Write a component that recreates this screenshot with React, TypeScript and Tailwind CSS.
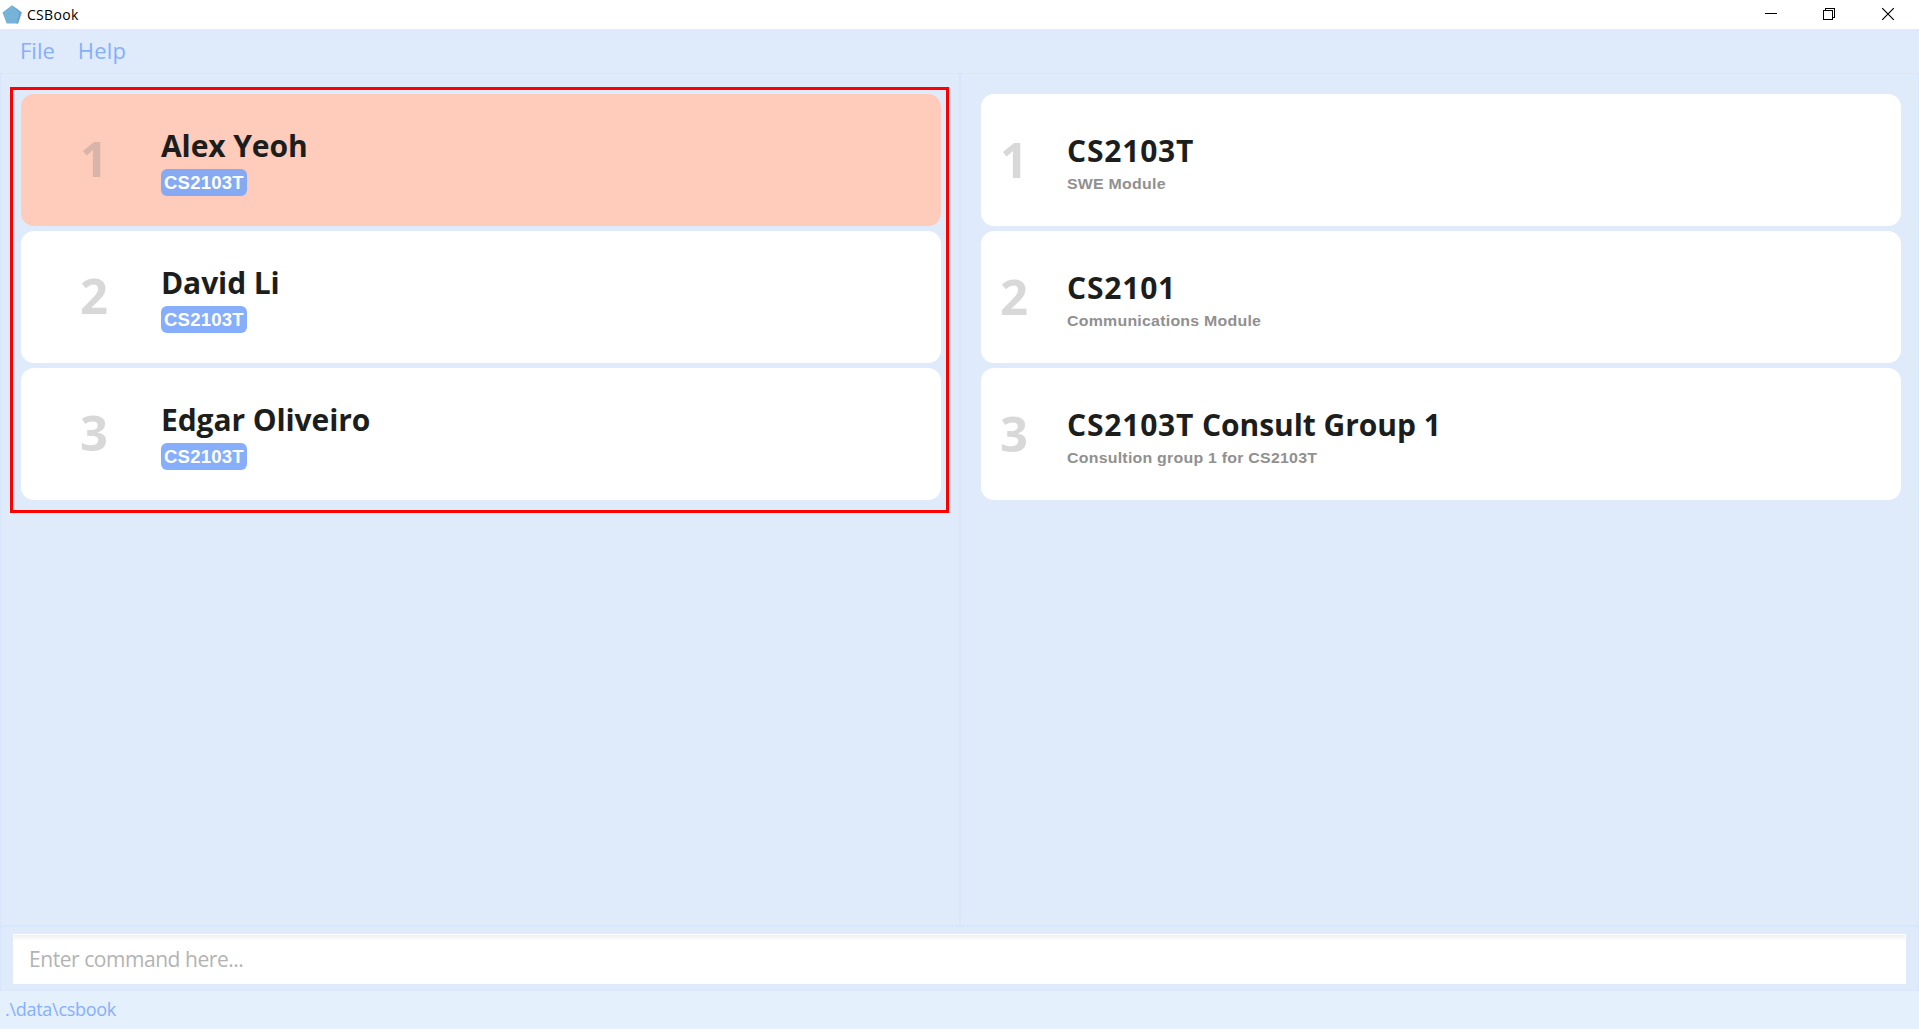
type Person = { id: number; name: string; tag: string; selected?: boolean };
type Group = { id: number; code: string; rest?: string; note: string };

const people: Person[] = [
  { id: 1, name: "Alex Yeoh", tag: "CS2103T", selected: true },
  { id: 2, name: "David Li", tag: "CS2103T" },
  { id: 3, name: "Edgar Oliveiro", tag: "CS2103T" },
];

const groups: Group[] = [
  { id: 1, code: "CS2103T", note: "SWE Module" },
  { id: 2, code: "CS2101", note: "Communications Module" },
  { id: 3, code: "CS2103T", rest: " Consult Group 1", note: "Consultion group 1 for CS2103T" },
];

function TitleBar() {
  return (
    <header className="flex h-[29px] shrink-0 items-center bg-white">
      <svg className="ml-[2px] h-5 w-5 shrink-0" viewBox="0 0 20 20">
        <path d="M10 0.3 19.7 7.6 16 18.6H4.6L0.5 7.6Z" fill="#77b2d8" />
        <path d="M10 0.3 19.7 7.6 16 18.6l-1.6 0 3-10.6Z" fill="#68a3cc" />
      </svg>
      <span className="ml-[5px] text-sm leading-[28px] tracking-[0.3px] text-black">CSBook</span>
      <div className="ml-auto flex h-full items-center">
        <svg className="h-[29px] w-[58px]" viewBox="0 0 58 29" fill="none" stroke="#000" shapeRendering="crispEdges">
          <path d="M17 13.5h12" />
        </svg>
        <svg className="h-[29px] w-[58px]" viewBox="0 0 58 29" fill="none" stroke="#000" shapeRendering="crispEdges">
          <path d="M17.5 10.5h9v9h-9zM19.5 10.5v-2h9v9h-2" />
        </svg>
        <svg className="h-[29px] w-[55px]" viewBox="0 0 55 29" fill="none" stroke="#000" strokeWidth="1.2">
          <path d="M18.2 8.2l11.6 11.6M29.8 8.2l-11.6 11.6" />
        </svg>
      </div>
    </header>
  );
}

function PersonCard({ person }: { person: Person }) {
  return (
    <li className={`flex h-[132px] rounded-[13px] ${person.selected ? "bg-[#ffcbba]" : "bg-white"}`}>
      <span
        className={`mt-[34px] w-[140px] shrink-0 pl-[59px] text-[49px] leading-[60px] font-bold ${
          person.selected ? "text-[#d9b5a9]" : "text-[#d8d8d8]"
        }`}
      >
        {person.id}
      </span>
      <div className="mt-[32px] flex flex-col items-start">
        <h2 className="text-[30px] leading-[40px] font-bold tracking-[-0.1px] text-[#1c1e1d]">{person.name}</h2>
        <span
          className={`mt-[3px] h-[27px] w-[86px] rounded-md pl-[3px] font-['Liberation_Sans',sans-serif] text-[17.5px] leading-[28px] font-bold text-white ${
            person.selected ? "bg-[#86a9f3]" : "bg-[#86aefb]"
          }`}
        >
          <span className="inline-block origin-left scale-x-[1.06] tracking-[0.2px]">{person.tag}</span>
        </span>
      </div>
    </li>
  );
}

function GroupCard({ group }: { group: Group }) {
  return (
    <li className="flex h-[132px] rounded-[13px] bg-white">
      <span className="mt-[35px] w-[86px] shrink-0 pl-[19px] text-[49px] leading-[60px] font-bold text-[#d8d8d8]">
        {group.id}
      </span>
      <div className="mt-[37px] flex flex-col items-start">
        <h2 className="text-[30px] leading-[40px] font-bold tracking-[-0.05px] whitespace-pre text-[#1c1e1d]">
          <span className="tracking-[0.8px]">{group.code}</span>
          {group.rest}
        </h2>
        <p className="mt-[3px] origin-left scale-x-[1.06] font-['Liberation_Sans',sans-serif] text-[15px] leading-5 font-bold tracking-[0.23px] text-[#909090]">
          {group.note}
        </p>
      </div>
    </li>
  );
}

export default function App() {
  return (
    <div className="flex h-[1029px] w-[1919px] flex-col overflow-hidden bg-[#dfebfb] font-['Open_Sans',sans-serif]">
      <TitleBar />
      <nav className="flex h-[44px] shrink-0 gap-[23px] pl-[20px] text-[22px] leading-[42px] text-[#86affb]">
        <span>File</span>
        <span className="tracking-[0.2px]">Help</span>
      </nav>
      <main className="flex h-[854px] shrink-0 border border-b-2 border-[#d7e6fb]">
        <section className="w-[958px] pt-[13px] pl-[9px]">
          <ul className="flex w-[939px] flex-col gap-[5px] border-3 border-[#fe0000] pt-1 pr-[5px] pb-[10px] pl-2">
            {people.map((p) => (
              <PersonCard key={p.id} person={p} />
            ))}
          </ul>
        </section>
        <section className="flex-1 border-l-2 border-[#d7e6fb] pt-5 pr-[17px] pl-5">
          <ul className="flex flex-col gap-[5px]">
            {groups.map((g) => (
              <GroupCard key={g.id} group={g} />
            ))}
          </ul>
        </section>
      </main>
      <div className="h-[64px] shrink-0 border-x border-b border-[#d7e6fb] px-3 pt-[7px]">
        <input
          className="block h-[50px] w-full border border-white bg-[linear-gradient(#f0f0f0,#ffffff_6px)] px-[15px] text-[21px] tracking-[-0.45px] outline-none placeholder:text-[#b3b3b3]"
          placeholder="Enter command here..."
        />
      </div>
      <footer className="flex-1 bg-[#e5f0fd] pl-[5px] text-[18px] leading-[37px] tracking-[-0.28px] text-[#86affb]">
        .\data\csbook
      </footer>
    </div>
  );
}
